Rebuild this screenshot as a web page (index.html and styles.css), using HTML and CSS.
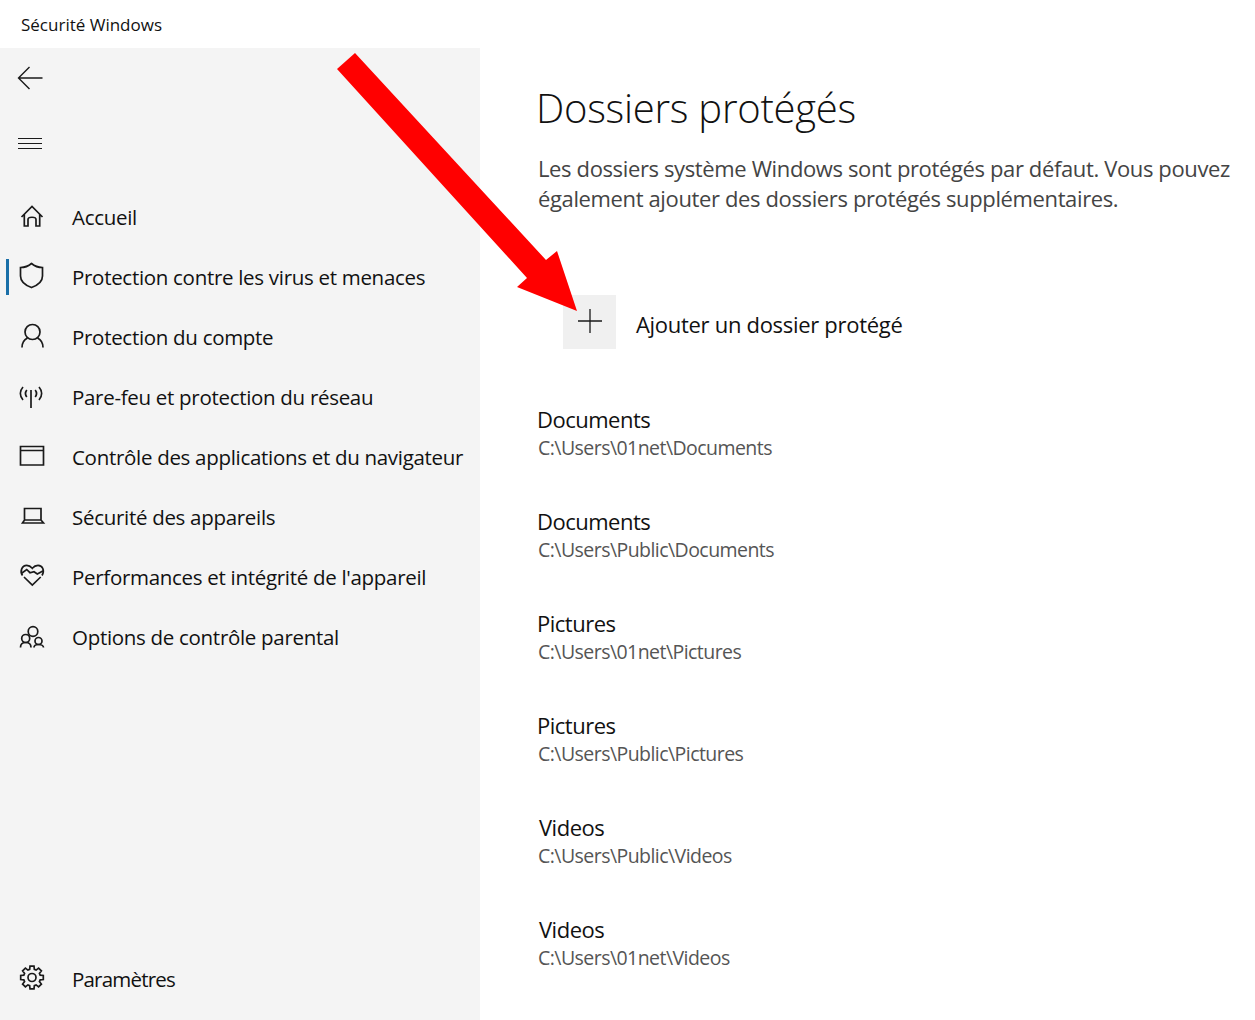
FILE: index.html
```html
<!DOCTYPE html>
<html>
  <head>
    <meta charset="utf-8">
    <title>Sécurité Windows</title>
    <link rel="stylesheet" href="styles.css">
  </head>
  <body>
    <div class="titlebar">Sécurité Windows</div>
    <div class="app">
      <div class="sidebar">
        <div class="top-btn back">
          <svg width="30" height="30" viewBox="0 0 30 30"><path d="M27.500 15H3.500M14.500 4L3.500 15L14.500 26"/></svg>
        </div>
        <div class="top-btn burger">
          <svg width="30" height="30" viewBox="0 0 30 30"><path d="M3 10.500H27M3 15.500H27M3 20.500H27"/></svg>
        </div>
        <ul class="nav">
          <li>
            <svg class="ico" width="30" height="30" viewBox="0 0 30 30"><path d="M4.500 15L15 4.500L25.500 15M7.300 12.500V24H11V17.500C11 14.500 19 14.500 19 17.500V24H22.700V12.500"/></svg>
            <span>Accueil</span>
          </li>
          <li class="active">
            <svg class="ico" width="30" height="30" viewBox="0 0 30 30"><path d="M14.500 1.500C11 4.500 7.500 5.500 3.500 5.500V14C3.500 19 7.500 23 14.500 25.500C21.500 23 25.500 19 25.500 14V5.500C21.500 5.500 18 4.500 14.500 1.500Z"/></svg>
            <span>Protection contre les virus et menaces</span>
          </li>
          <li>
            <svg class="ico" width="30" height="30" viewBox="0 0 30 30"><circle cx="15.500" cy="10" r="7.500"/><path d="M5 25.500C5 21 7.500 17.500 10.500 16M20.500 16C23.500 17.500 26 21 26 25.500"/></svg>
            <span>Protection du compte</span>
          </li>
          <li>
            <svg class="ico" width="30" height="30" viewBox="0 0 30 30"><path d="M14 8V26M6 5C2.500 9 2.500 14 6 18M22 5C25.500 9 25.500 14 22 18M9.800 8C8.300 10 8.300 13 9.800 15M18.200 8C19.700 10 19.700 13 18.200 15"/></svg>
            <span>Pare-feu et protection du réseau</span>
          </li>
          <li>
            <svg class="ico" width="30" height="30" viewBox="0 0 30 30"><path d="M3.500 4.500H26.500V23H3.500ZM3.500 8.500H26.500"/></svg>
            <span>Contrôle des applications et du navigateur</span>
          </li>
          <li>
            <svg class="ico" width="30" height="30" viewBox="0 0 30 30"><path d="M7.500 18V6.500H24V18M5.500 21L7.500 18H24L26.500 21Z"/></svg>
            <span>Sécurité des appareils</span>
          </li>
          <li>
            <svg class="ico" width="30" height="30" viewBox="0 0 30 30"><path d="M4.300 11.500L9.700 7.500L13 10.700L17 9.700L20.300 12L26.300 8.700M7 15L15.300 23L23.700 15M5.500 13.500C2.500 9.500 5 3.300 9.700 3.300C12 3.300 13.800 4.500 15.300 6.300C16.800 4.500 18.700 3.300 21 3.300C25.500 3.300 28 8.500 25 13.500"/></svg>
            <span>Performances et intégrité de l'appareil</span>
          </li>
          <li>
            <svg class="ico" width="30" height="30" viewBox="0 0 30 30"><circle cx="16" cy="9.500" r="4.800"/><circle cx="8.700" cy="16.500" r="4"/><circle cx="21.500" cy="19" r="3.500"/><path d="M3.500 25.500C3.500 22.500 5.500 20.500 8.700 20.500C12 20.500 14 22.500 14 25.500M17 25.500C17 24 18.500 22.500 21.500 22.500C24.500 22.500 26.500 24 26.500 25.500"/></svg>
            <span>Options de contrôle parental</span>
          </li>
        </ul>
        <div class="settings">
          <svg class="ico" width="30" height="30" viewBox="0 1 30 30"><circle cx="15" cy="14.500" r="4"/><path d="M12.660 6.330L13 3.200H17L17.340 6.330L19.120 7.070L21.580 5.100L24.400 7.920L22.430 10.380L23.170 12.160L26.300 12.500V16.500L23.170 16.840L22.430 18.620L24.400 21.080L21.580 23.900L19.120 21.930L17.340 22.670L17 25.800H13L12.660 22.670L10.880 21.930L8.420 23.900L5.600 21.080L7.570 18.620L6.830 16.840L3.700 16.500V12.500L6.830 12.160L7.570 10.380L5.600 7.920L8.420 5.100L10.880 7.070Z"/></svg>
          <span>Paramètres</span>
        </div>
      </div>

      <div class="main">
        <h1>Dossiers protégés</h1>
        <p class="intro">Les dossiers système Windows sont protégés par défaut. Vous pouvez également ajouter des dossiers protégés supplémentaires.</p>
        <div class="add">
          <div class="add-btn">
            <svg width="30" height="30" viewBox="0 0 30 30"><path d="M15 3V27M3 15H27"/></svg>
          </div>
          <span>Ajouter un dossier protégé</span>
        </div>
        <div class="folder"><div class="name">Documents</div><div class="path">C:\Users\01net\Documents</div></div>
        <div class="folder"><div class="name">Documents</div><div class="path">C:\Users\Public\Documents</div></div>
        <div class="folder"><div class="name">Pictures</div><div class="path">C:\Users\01net\Pictures</div></div>
        <div class="folder"><div class="name">Pictures</div><div class="path">C:\Users\Public\Pictures</div></div>
        <div class="folder"><div class="name video">Videos</div><div class="path">C:\Users\Public\Videos</div></div>
        <div class="folder"><div class="name video">Videos</div><div class="path">C:\Users\01net\Videos</div></div>
      </div>
    </div>

    <svg class="arrow" width="1255" height="1020" viewBox="0 0 1255 1020"><polygon points="355,53 337,69 527,278 517,287 577,311 557,251 546,260"/></svg>
  </body>
</html>
```

FILE: styles.css
```css
*{
  margin: 0;
  padding: 0;
  box-sizing: border-box;
}
html,body{
  height: 1020px;
  overflow: hidden;
}
body{
  background: #fff;
  color: #111;
  font-family: "Open Sans", "Noto Sans", sans-serif;
  position: relative;
}
svg path,svg circle{
  fill: none;
  stroke: #1a1a1a;
  stroke-width: 1.7;
}
.titlebar{
  height: 48px;
  padding-left: 21px;
  line-height: 49px;
  font-size: 17px;
}
.app{
  display: flex;
  height: 972px;
}
.sidebar{
  width: 480px;
  background: #f4f4f4;
  display: flex;
  flex-direction: column;
}
.top-btn{
  padding-left: 15px;
  display: flex;
  align-items: center;
}
.back{
  height: 60px;
}
.burger{
  height: 70px;
}
.top-btn svg path{
  stroke-width: 1.4;
}
.burger svg path{
  stroke-width: 1;
}
.nav{
  list-style: none;
  margin-top: 9px;
}
.nav li,.settings{
  height: 60px;
  display: flex;
  align-items: center;
  padding-left: 17px;
  font-size: 20.500px;
  letter-spacing: -0.3px;
  position: relative;
}
.nav li span,.settings span{
  margin-left: 25px;
}
.nav li.active::before{
  content: "";
  position: absolute;
  left: 6px;
  top: 12px;
  width: 3px;
  height: 36px;
  background: #1a6fa8;
}
.settings{
  margin-top: auto;
  margin-bottom: 11px;
  letter-spacing: -0.8px;
}
.main{
  flex: 1;
  padding: 27px 20px 0 57px;
}
h1{
  margin-left: -1px;
  font-size: 40px;
  font-weight: 300;
  line-height: 66px;
  letter-spacing: -0.25px;
}
.intro{
  margin: 12px 0 0 1px;
  font-size: 22px;
  line-height: 30px;
  color: #444;
  letter-spacing: -0.37px;
}
.add{
  margin: 82px 0 0 26px;
  display: flex;
  align-items: center;
  font-size: 22px;
  letter-spacing: -0.3px;
}
.add span{
  padding-top: 4px;
}
.add-btn{
  width: 53px;
  height: 54px;
  padding-bottom: 2px;
  background: #f0f0f0;
  display: flex;
  align-items: center;
  justify-content: center;
  margin-right: 20px;
}
.add-btn svg path{
  stroke-width: 1.3;
}
.folder{
  height: 102px;
}
.add + .folder{
  margin-top: 54px;
}
.name{
  font-size: 22px;
  line-height: 32px;
  letter-spacing: -0.5px;
}
.video{
  margin-left: 2px;
}
.path{
  margin: 1px 0 0 1px;
  font-size: 19.500px;
  line-height: 24px;
  color: #555;
  letter-spacing: -0.55px;
}
.arrow{
  position: absolute;
  left: 0;
  top: 0;
  fill: #ff0000;
}
```
